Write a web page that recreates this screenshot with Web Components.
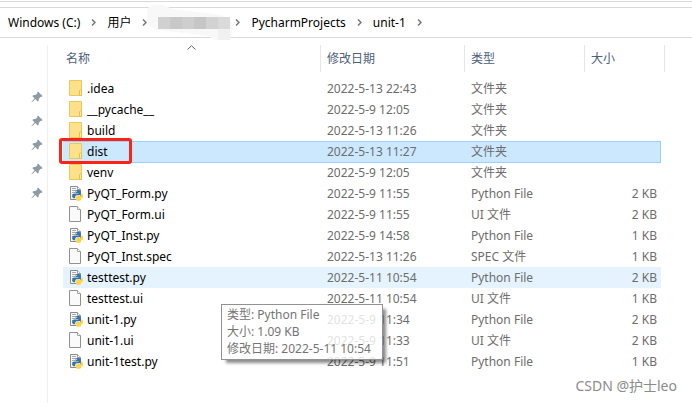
<!DOCTYPE html>
<html lang="zh-CN">
<head>
<meta charset="utf-8">
<title>unit-1</title>
<style>
  body {
    margin: 0;
    background: #fff;
    color: #000;
    font: 12px/17px "Noto Sans", "Noto Sans CJK SC", sans-serif;
  }
</style>
</head>
<body>
<explorer-window>
  <path-bar slot="path">
    <path-item>Windows (C:)</path-item>
    <path-item>用户</path-item>
    <path-item masked></path-item>
    <path-item>PycharmProjects</path-item>
    <path-item>unit-1</path-item>
  </path-bar>
  <pin-list slot="side" count="5"></pin-list>
  <file-table></file-table>
  <file-tip slot="over">
    <div>类型: Python File</div>
    <div>大小: 1.09 KB</div>
    <div>修改日期: 2022-5-11 10:54</div>
  </file-tip>
  <water-mark slot="over">CSDN @护士leo</water-mark>
</explorer-window>

<script>
const FILES = [
  ['folder', '.idea', '2022-5-13 22:43', '文件夹', ''],
  ['folder', '__pycache__', '2022-5-9 12:05', '文件夹', ''],
  ['folder', 'build', '2022-5-13 11:26', '文件夹', ''],
  ['folder', 'dist', '2022-5-13 11:27', '文件夹', '', 'selected'],
  ['folder', 'venv', '2022-5-9 12:05', '文件夹', ''],
  ['python', 'PyQT_Form.py', '2022-5-9 11:55', 'Python File', '2 KB'],
  ['page', 'PyQT_Form.ui', '2022-5-9 11:55', 'UI 文件', '2 KB'],
  ['python', 'PyQT_Inst.py', '2022-5-9 14:58', 'Python File', '1 KB'],
  ['page', 'PyQT_Inst.spec', '2022-5-13 11:26', 'SPEC 文件', '1 KB'],
  ['python', 'testtest.py', '2022-5-11 10:54', 'Python File', '2 KB', 'hover'],
  ['page', 'testtest.ui', '2022-5-11 10:54', 'UI 文件', '1 KB'],
  ['python', 'unit-1.py', '2022-5-9 11:34', 'Python File', '2 KB'],
  ['page', 'unit-1.ui', '2022-5-9 11:33', 'UI 文件', '2 KB'],
  ['python', 'unit-1test.py', '2022-5-9 11:51', 'Python File', '1 KB']
];

const ICONS = {
  folder: `
    <path d="M.5.5V15.5H12.5V.5Z" fill="#ffe394" stroke="#ebc958"/>
    <path d="M1 1H12V9L10 11V15H1Z" fill="#ffe18c"/>
    <path d="M10.500 15.500V10.500L12.500 9.500V15.500Z" fill="#ffe9a8" stroke="#e8c14a"/>`,
  page: `
    <path d="M.5.5H8.500L11.500 3.500V15.500H.5Z" fill="#fafafa" stroke="#919191"/>
    <path d="M8.500.5V3.500H11.500" fill="#fff" stroke="#a5a5a5"/>`,
  python: `
    <path d="M1.500 1.500H8.500L11.500 4.500V14.500H1.500Z" fill="#f7f7f7" stroke="#8b8b8b"/>
    <path d="M8.500 1.500V4.500H11.500" fill="#fff" stroke="#999"/>
    <path d="M3 3.500H7M3 5.500H7M3 7.500H6M3 9.500H5M3 11.500H5" stroke="#a9a9a9"/>
    <path d="M9 5C7 5 6.500 5.700 6.500 6.700V8H9.500V8.500H5.200C3.900 8.500 3.200 9.500 3.200 11S4 13.300 5.200 13.300H6.200V11.800C6.200 10.800 7 10.200 8 10.200H10.200C11.200 10.200 11.800 9.500 11.800 8.600V6.700C11.800 5.600 11 5 9 5Z" fill="#3674a8"/>
    <path d="M12.300 8.200V9.600C12.300 10.600 11.500 11.100 10.500 11.100H8.400C7.400 11.100 6.900 11.700 6.900 12.600V14.300C6.900 15.400 7.800 16 9.500 16S12 15.400 12 14.300V13.300H13C13.800 13.300 14 12 14 10.700S13.500 8.200 12.300 8.200Z" fill="#ffd449"/>
    <circle cx="7.700" cy="6.400" r=".5" fill="#fff"/>`
};

class BaseElement extends HTMLElement {
  constructor() {
    super();
    this.attachShadow({ mode: 'open' });
  }
  connectedCallback() {
    this.shadowRoot.innerHTML = this.render();
  }
}

class ExplorerWindow extends BaseElement {
  render() {
    return `
      <style>
        :host {
          display: flex;
          flex-direction: column;
          position: relative;
          min-height: 100vh;
        }
        .body {
          display: flex;
          flex: 1;
          padding-top: 7px;
        }
        aside {
          flex: none;
          width: 47px;
          border-right: 1px solid #f0f0f0;
        }
        main {
          flex: 1;
          padding: 0 27px 0 15px;
        }
      </style>
      <slot name="path"></slot>
      <div class="body">
        <aside><slot name="side"></slot></aside>
        <main><slot></slot></main>
      </div>
      <slot name="over"></slot>`;
  }
}

class PathBar extends BaseElement {
  render() {
    return `
      <style>
        :host {
          display: block;
          padding-top: 1px;
        }
        .strip {
          height: 5px;
          border-top: 1px solid #d9d9d9;
          border-bottom: 1px solid #d9d9d9;
        }
        nav {
          display: flex;
          align-items: center;
          height: 29px;
          padding-left: 8px;
          border-bottom: 1px solid #d9d9d9;
        }
      </style>
      <div class="strip"></div>
      <nav aria-label="path"><slot></slot></nav>`;
  }
}

class PathItem extends BaseElement {
  render() {
    // the user name is hidden behind a mosaic
    const greys = ['#d0d0d0', '#c8c8c8', '#cecece', '#c6c6c6', '#d2d2d2', '#dadada'];
    const mask = `
      <svg class="mask" width="72" height="36" viewBox="0 0 72 36">
        <path d="M-11 8C-11 0-5-1 5 0L14 4 48 8C64 9 75 13 75 24C75 34 70 36 60 35C52 34 54 31 44 30L8 26C-4 25-12 22-11 14Z" fill="#f8f8f8"/>
        ${greys.map((c, i) => `<rect x="${i * 12}" y="12" width="12" height="12" fill="${c}"/>`).join('')}
        <rect x="60" y="24" width="12" height="11" fill="#f1f1f1"/>
      </svg>`;
    return `
      <style>
        :host {
          display: flex;
          align-items: center;
          gap: 11px;
          margin-right: 11px;
        }
        a {
          color: #000;
          text-decoration: none;
          white-space: nowrap;
        }
        svg {
          display: block;
        }
        .mask {
          overflow: visible;
          margin: -4px -6px -4px 0;
        }
      </style>
      ${this.hasAttribute('masked') ? mask : '<a href="#"><slot></slot></a>'}
      <svg width="5" height="7" viewBox="0 0 5 7"><path d="M1 .5L4 3.500 1 6.500" fill="none" stroke="#777" stroke-width="1.500"/></svg>`;
  }
}

class PinList extends BaseElement {
  render() {
    const pin = `
      <svg width="12" height="12" viewBox="0 0 12 12">
        <path d="M7 .5L11.500 5 10.500 6 9.700 5.700 7.800 7.700 7.700 9.700 6.700 10.500 4.300 8 1 11.300 .4 10.900 3.500 7.300 1.300 5 2.200 4.200 4.400 4.100 6.400 2.200 6.100 1.400Z" fill="#8e9aa5"/>
      </svg>`;
    return `
      <style>
        :host {
          display: flex;
          flex-direction: column;
          align-items: flex-end;
          gap: 12px;
          padding: 46px 4px 0 0;
        }
      </style>
      ${pin.repeat(Number(this.getAttribute('count')))}`;
  }
}

class FileIcon extends BaseElement {
  render() {
    return `
      <style>
        :host {
          display: block;
          flex: none;
        }
        svg {
          display: block;
        }
      </style>
      <svg width="16" height="16" viewBox="0 0 16 16" fill="none">${ICONS[this.getAttribute('kind')]}</svg>`;
  }
}

class FileTable extends BaseElement {
  row([kind, name, date, type, size, state = '']) {
    return `
      <tr class="${state}">
        <td><div class="name"><file-icon kind="${kind}"></file-icon><span>${name}</span></div></td>
        <td>${date}</td>
        <td>${type}</td>
        <td class="size">${size}</td>
        <td class="rest"></td>
      </tr>`;
  }
  render() {
    return `
      <style>
        :host {
          display: block;
        }
        table {
          width: 100%;
          table-layout: fixed;
          border-collapse: separate;
          border-spacing: 0;
          color: #6d6d6d;
        }
        .date { width: 144px; }
        .type { width: 120px; }
        .bytes { width: 76px; }
        .edge { width: 4px; }
        th {
          position: relative;
          height: 27px;
          padding: 0 6px;
          border-right: 1px solid #e5e5e5;
          box-sizing: border-box;
          color: #4c607a;
          font-weight: normal;
          text-align: left;
        }
        th:first-child {
          padding-left: 3px;
        }
        th svg {
          position: absolute;
          top: 0;
          left: 0;
          right: 0;
          margin: 0 auto;
        }
        tbody::before {
          content: "";
          display: block;
          height: 6px;
        }
        td {
          height: 21px;
          padding: 0 6px;
          white-space: nowrap;
        }
        .size {
          padding-right: 4px;
          text-align: right;
        }
        .rest {
          padding: 0;
        }
        .name {
          display: flex;
          align-items: flex-start;
          gap: 2px;
          position: relative;
          color: #000;
        }
        .hover td:not(.rest) {
          background: #e5f3ff;
        }
        .selected td:not(.rest) {
          background: #cce8ff;
          box-shadow: inset 0 1px #99d1ff, 0 1px #99d1ff;
        }
        .selected td.size {
          box-shadow: inset -1px 1px #99d1ff, 0 1px #99d1ff;
        }
        /* hand-drawn marker round the chosen folder */
        .selected .name::after {
          content: "";
          position: absolute;
          top: -5px;
          left: -10px;
          width: 67px;
          height: 20px;
          border: 3px solid #fb2416;
          border-radius: 3px;
        }
      </style>
      <table>
        <colgroup><col><col class="date"><col class="type"><col class="bytes"><col class="edge"></colgroup>
        <thead>
          <tr>
            <th>名称<svg width="9" height="5" viewBox="0 0 9 5"><path d="M.5 4.500L4.500 .7 8.500 4.500" fill="none" stroke="#666"/></svg></th>
            <th>修改日期</th>
            <th>类型</th>
            <th colspan="2">大小</th>
          </tr>
        </thead>
        <tbody>${FILES.map(this.row).join('')}</tbody>
      </table>`;
  }
}

class FileTip extends BaseElement {
  render() {
    return `
      <style>
        :host {
          position: absolute;
          top: 304px;
          left: 221px;
          min-width: 150px;
          padding: 1px 5px 2px;
          border: 1px solid #929292;
          background: rgba(255, 255, 255, .8);
          box-shadow: 4px 4px 3px -1px rgba(0, 0, 0, .45);
          color: #757575;
          white-space: nowrap;
        }
      </style>
      <slot></slot>`;
  }
}

class WaterMark extends BaseElement {
  render() {
    return `
      <style>
        :host {
          position: absolute;
          right: 15px;
          bottom: 7px;
          color: #8b8b8b;
          font-size: 14px;
          line-height: 20px;
        }
      </style>
      <slot></slot>`;
  }
}

customElements.define('explorer-window', ExplorerWindow);
customElements.define('path-bar', PathBar);
customElements.define('path-item', PathItem);
customElements.define('pin-list', PinList);
customElements.define('file-icon', FileIcon);
customElements.define('file-table', FileTable);
customElements.define('file-tip', FileTip);
customElements.define('water-mark', WaterMark);
</script>
</body>
</html>
